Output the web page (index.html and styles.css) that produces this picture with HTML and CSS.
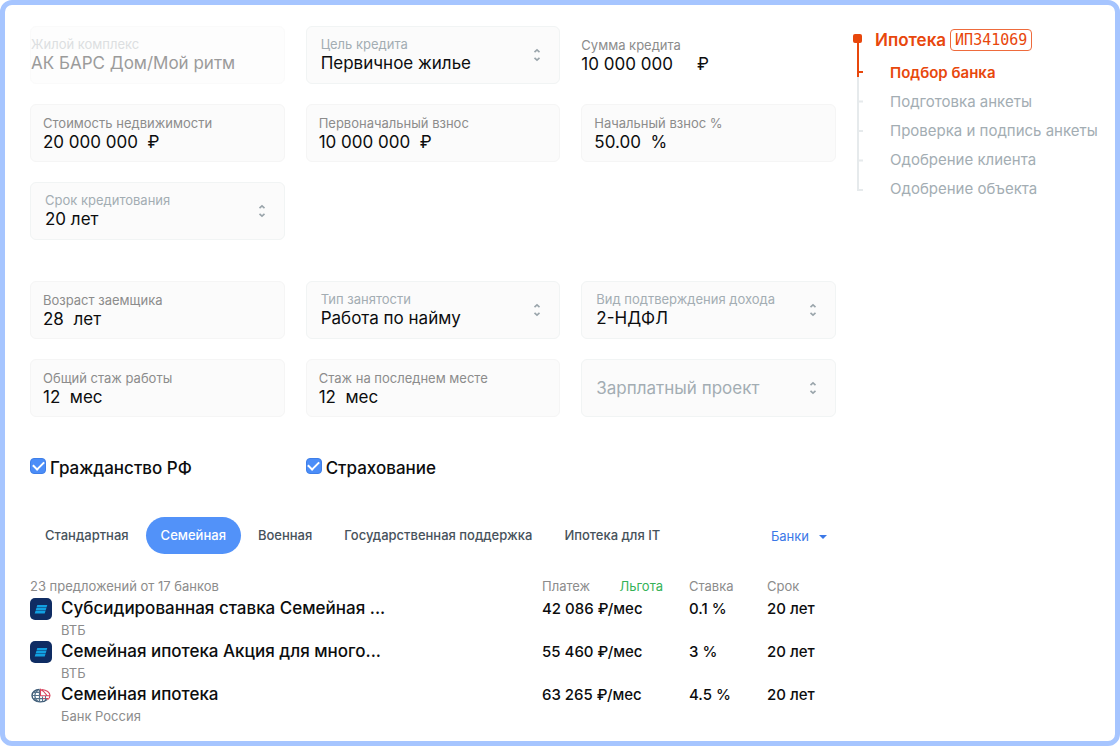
FILE: index.html
```html
<!DOCTYPE html>
<html lang="ru">
<head>
<meta charset="utf-8">
<meta name="viewport" content="width=device-width, initial-scale=1">
<title>Ипотека — подбор банка</title>
<link rel="stylesheet" href="styles.css">
</head>
<body>
<svg class="sprite" aria-hidden="true">
  <symbol id="updown" viewBox="0 0 8 14"><path d="M1.500 4.200 4 1.800l2.500 2.400M1.500 9.800 4 12.200l2.500-2.400" fill="none" stroke="currentColor" stroke-width="1.600"/></symbol>
  <symbol id="vtb" viewBox="0 0 22 22"><rect width="22" height="22" rx="5" fill="#0f2c63"/><path d="M7.300 6.900h10l-.8 2.500H6.500zM6.400 9.900h10l-.8 2.500H5.600zM5.500 12.900h10l-.8 2.500H4.700z" fill="#12a0e2"/></symbol>
  <symbol id="russia" viewBox="0 0 22 22"><g fill="none"><path d="M9.500 5.500C5 5.700 2 8.300 2 11.500c0 3.400 3.300 6.100 8 6.400 3.200.1 5.500-.9 7-2.400" stroke="#3d5a75" stroke-width="1.400"/><path d="M8 6C3.800 9 3.800 14.500 8 17.500M9.500 5.500v12.300M2 11.500h9M3.200 8.400h6.500M3.200 14.700h12" stroke="#54718a" stroke-width="1.200"/><path d="M10.500 11.800V5.300c3 1.600 4.800 3.500 6.500 6.200M12 5.500c4.500.5 8 3 8 6 0 1.800-1 3.200-2.500 4.300M10.500 11.800H20M12 14.500h6" stroke="#d9455f" stroke-width="1.100"/><path d="M12.500 12.500v5M15.500 12v4" stroke="#54718a"/></g></symbol>
</svg>
<div class="frame">
  <main class="main">
    <form class="form">
      <div class="grid">
        <div class="card card-select card-disabled">
          <div class="field">
            <label for="complex">Жилой комплекс</label>
            <input id="complex" value="АК БАРС Дом/Мой ритм" disabled>
          </div>
        </div>
        <div class="card card-select">
          <div class="field">
            <label for="purpose">Цель кредита</label>
            <select id="purpose"><option>Первичное жилье</option></select>
          </div>
          <svg class="updown" aria-hidden="true"><use href="#updown"/></svg>
        </div>
        <div class="card card-plain">
          <div class="field">
            <span class="caption">Сумма кредита</span>
            <span class="sum"><span>10 000 000</span><span>₽</span></span>
          </div>
        </div>
        <div class="card">
          <div class="field">
            <label for="price">Стоимость недвижимости</label>
            <input id="price" value="20 000 000&nbsp; ₽">
          </div>
        </div>
        <div class="card">
          <div class="field">
            <label for="down">Первоначальный взнос</label>
            <input id="down" value="10 000 000&nbsp; ₽">
          </div>
        </div>
        <div class="card">
          <div class="field">
            <label for="percent">Начальный взнос %</label>
            <input id="percent" value="50.00&nbsp; %">
          </div>
        </div>
        <div class="card card-select">
          <div class="field">
            <label for="term">Срок кредитования</label>
            <select id="term"><option>20 лет</option></select>
          </div>
          <svg class="updown" aria-hidden="true"><use href="#updown"/></svg>
        </div>
      </div>
      <div class="grid">
        <div class="card">
          <div class="field">
            <label for="age">Возраст заемщика</label>
            <input id="age" value="28&nbsp; лет">
          </div>
        </div>
        <div class="card card-select">
          <div class="field">
            <label for="job">Тип занятости</label>
            <select id="job"><option>Работа по найму</option></select>
          </div>
          <svg class="updown" aria-hidden="true"><use href="#updown"/></svg>
        </div>
        <div class="card card-select">
          <div class="field">
            <label for="income">Вид подтверждения дохода</label>
            <select id="income"><option>2-НДФЛ</option></select>
          </div>
          <svg class="updown" aria-hidden="true"><use href="#updown"/></svg>
        </div>
        <div class="card">
          <div class="field">
            <label for="total">Общий стаж работы</label>
            <input id="total" value="12&nbsp; мес">
          </div>
        </div>
        <div class="card">
          <div class="field">
            <label for="last">Стаж на последнем месте</label>
            <input id="last" value="12&nbsp; мес">
          </div>
        </div>
        <div class="card card-select card-empty">
          <div class="field">
            <select id="salary" aria-label="Зарплатный проект"><option>Зарплатный проект</option></select>
          </div>
          <svg class="updown" aria-hidden="true"><use href="#updown"/></svg>
        </div>
      </div>
      <div class="grid">
        <label class="check"><input type="checkbox" checked><span>Гражданство РФ</span></label>
        <label class="check"><input type="checkbox" checked><span>Страхование</span></label>
      </div>
    </form>

    <div class="toolbar">
      <div class="tabs" role="tablist">
        <button class="tab" type="button" role="tab">Стандартная</button>
        <button class="tab tab-active" type="button" role="tab" aria-selected="true">Семейная</button>
        <button class="tab" type="button" role="tab">Военная</button>
        <button class="tab" type="button" role="tab">Государственная поддержка</button>
        <button class="tab" type="button" role="tab">Ипотека для IT</button>
      </div>
      <button class="banks" type="button">Банки<span class="caret"></span></button>
    </div>

    <table class="offers">
      <thead>
        <tr>
          <th class="col-name">23 предложений от 17 банков</th>
          <th class="col-pay"><span class="pay-head"><span>Платеж</span><span class="benefit">Льгота</span></span></th>
          <th class="col-rate">Ставка</th>
          <th class="col-term">Срок</th>
        </tr>
      </thead>
      <tbody>
        <tr>
          <td><div class="offer"><svg class="logo" aria-hidden="true"><use href="#vtb"/></svg><div><div class="offer-name">Субсидированная ставка Семейная ...</div><div class="bank">ВТБ</div></div></div></td>
          <td>42 086 ₽/мес</td><td>0.1 %</td><td>20 лет</td>
        </tr>
        <tr>
          <td><div class="offer"><svg class="logo" aria-hidden="true"><use href="#vtb"/></svg><div><div class="offer-name">Семейная ипотека Акция для много...</div><div class="bank">ВТБ</div></div></div></td>
          <td>55 460 ₽/мес</td><td>3 %</td><td>20 лет</td>
        </tr>
        <tr>
          <td><div class="offer"><svg class="logo" aria-hidden="true"><use href="#russia"/></svg><div><div class="offer-name">Семейная ипотека</div><div class="bank">Банк Россия</div></div></div></td>
          <td>63 265 ₽/мес</td><td>4.5 %</td><td>20 лет</td>
        </tr>
      </tbody>
    </table>
  </main>

  <aside class="side">
    <svg class="rail" viewBox="0 0 12 158" aria-hidden="true">
      <path d="M6 36v121M6 67.500h5M6 97h5M6 126.500h5M6 156h5" fill="none" stroke="#e6eaec" stroke-width="2"/>
      <path d="M6 6v37M6 38h5" fill="none" stroke="#e8470c" stroke-width="2"/>
      <rect x="1" y="0" width="9" height="9" rx="2" fill="#e8470c"/>
    </svg>
    <div>
      <h1 class="title">Ипотека <span class="code">ИП341069</span></h1>
      <ol class="steps">
        <li class="current">Подбор банка</li>
        <li>Подготовка анкеты</li>
        <li>Проверка и подпись анкеты</li>
        <li>Одобрение клиента</li>
        <li>Одобрение объекта</li>
      </ol>
    </div>
  </aside>
</div>
</body>
</html>
```
FILE: styles.css
```css
* { box-sizing: border-box; }

body {
  margin: 0;
  background: #fff;
  color: #0c0d0e;
  font: 17px/20px Inter, "Liberation Sans", sans-serif;
}

.sprite { display: none; }

.frame {
  display: flex;
  align-items: flex-start;
  gap: 16px;
  min-height: 100vh;
  padding: 21px 20px 15px 25px;
  border: 5px solid #a6c5ff;
  border-radius: 12px;
}

.main { flex: 1; min-width: 0; }

.form { display: grid; gap: 41px; }

.grid {
  display: grid;
  grid-template-columns: repeat(3, minmax(0, 1fr));
  gap: 20px 21px;
}

.card {
  display: flex;
  align-items: center;
  min-height: 58px;
  padding: 0 12px;
  border: 1px solid #f5f5f5;
  border-radius: 6px;
  background: #fbfbfb;
}

.field {
  display: flex;
  flex: 1;
  flex-direction: column;
  min-width: 0;
}

.field label,
.caption {
  color: #8c8c8c;
  font-size: 13px;
  line-height: 18px;
}

.field input,
.field select {
  width: 100%;
  height: 20px;
  margin: 0;
  padding: 0;
  border: 0;
  outline: 0;
  background: none;
  color: inherit;
  font: inherit;
  appearance: none;
}

.card-select {
  padding: 0 18px 0 14px;
  border: 1px solid #f1f4f4;
}

.card-select .field { padding-bottom: 2px; }
.card-select label { color: #a3adb3; }

.card-disabled {
  padding: 0;
  border-color: #fafafa;
  background: #fdfdfd;
}

.card-disabled label { color: #dcdfe1; }
.card-disabled input { color: #9b9b9b; }

.card-plain {
  padding: 0;
  border: 0;
  background: none;
}

.sum { display: flex; gap: 24px; }

.card-empty .field { padding-bottom: 0; }
.card-empty .field select { color: #a3adb3; }

.updown { width: 8px; height: 14px; color: #9aa5ab; }

.check {
  display: flex;
  align-items: flex-start;
  gap: 4px;
  font-weight: 500;
}

.check input {
  display: grid;
  place-items: center;
  width: 16px;
  height: 16px;
  margin: 0;
  border: 1px solid #3f7fe8;
  border-radius: 4px;
  background: #4b8df8;
  appearance: none;
}

.check input:checked::before {
  content: "";
  width: 9px;
  height: 5px;
  margin-bottom: 3px;
  border: solid #fff;
  border-width: 0 0 2px 2px;
  transform: rotate(-45deg);
}

.toolbar {
  display: flex;
  align-items: center;
  justify-content: space-between;
  margin-top: 39px;
}

.tabs { display: flex; gap: 2px; }

.tab,
.banks {
  border: 0;
  background: none;
  font: 500 13px/17px Inter, "Liberation Sans", sans-serif;
}

.tab {
  padding: 10px 15px;
  border-radius: 19px;
  color: #47525b;
}

.tab-active { background: #5292f9; color: #fff; }

.banks {
  display: flex;
  align-items: center;
  gap: 10px;
  padding: 2px 9px 0;
  color: #3b78e7;
  font-weight: 400;
}

.caret {
  border: 4px solid transparent;
  border-top-color: #3b78e7;
  border-bottom: 0;
}

.offers {
  width: 100%;
  margin-top: 22px;
  border-collapse: collapse;
  table-layout: fixed;
}

.offers th,
.offers td {
  padding: 0;
  text-align: left;
  vertical-align: top;
}

.offers th {
  color: #8c8c8c;
  font-size: 13px;
  font-weight: 400;
}

.offers td { font-size: 15px; font-weight: 500; line-height: 25px; }

.col-pay { width: 147px; }
.col-rate { width: 78px; }
.col-term { width: 69px; }

.pay-head { display: flex; justify-content: space-between; padding-right: 26px; }
.benefit { color: #34b257; }

.offer { display: flex; gap: 9px; }
.offer-name { font-size: 17px; line-height: 25px; }
.bank { color: #8c8c8c; font-size: 13px; font-weight: 400; line-height: 18px; }
.logo { flex: none; width: 22px; height: 22px; margin-top: 2px; }

.side { display: flex; gap: 11px; width: 243px; }
.rail { flex: none; width: 12px; height: 158px; margin-top: 8px; }

.title {
  display: flex;
  align-items: center;
  gap: 4px;
  margin: 3px 0 0;
  color: #e8470c;
  font-size: 17px;
  font-weight: 600;
  line-height: 22px;
}

.code {
  padding: 0 4px;
  border: 1px solid #ee6b3d;
  border-radius: 4px;
  font: 15px/20px "DejaVu Sans Mono", monospace;
}

.steps {
  margin: 7px 0 0;
  padding: 0 0 0 15px;
  color: #a3adb3;
  font-size: 15px;
  line-height: 29px;
  list-style: none;
  white-space: nowrap;
}

.current { color: #e8470c; font-weight: 600; }
```
